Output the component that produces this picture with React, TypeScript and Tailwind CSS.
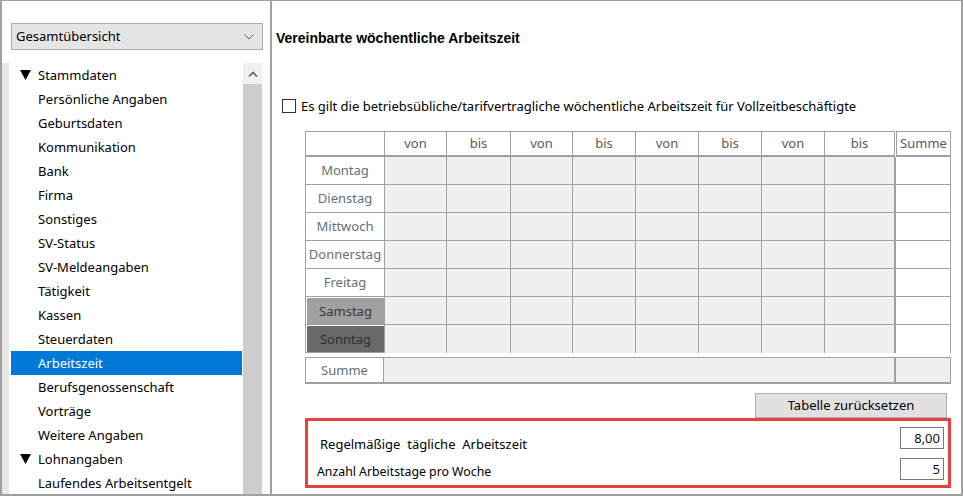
import React from "react";

const treeItems: { label: string; group?: boolean; selected?: boolean }[] = [
  { label: "Stammdaten", group: true },
  { label: "Persönliche Angaben" },
  { label: "Geburtsdaten" },
  { label: "Kommunikation" },
  { label: "Bank" },
  { label: "Firma" },
  { label: "Sonstiges" },
  { label: "SV-Status" },
  { label: "SV-Meldeangaben" },
  { label: "Tätigkeit" },
  { label: "Kassen" },
  { label: "Steuerdaten" },
  { label: "Arbeitszeit", selected: true },
  { label: "Berufsgenossenschaft" },
  { label: "Vorträge" },
  { label: "Weitere Angaben" },
  { label: "Lohnangaben", group: true },
  { label: "Laufendes Arbeitsentgelt" },
];

const colWidths = [62, 64, 62, 63, 63, 63, 63, 70];
const headers = ["von", "bis", "von", "bis", "von", "bis", "von", "bis"];
const days = ["Montag", "Dienstag", "Mittwoch", "Donnerstag", "Freitag", "Samstag", "Sonntag"];

const font = { fontFamily: '"Noto Sans", "Open Sans", sans-serif' };

export default function App() {
  return (
    <div
      className="w-[963px] h-[496px] bg-white flex border-t border-b-2 border-[#a0a0a0] overflow-hidden"
      style={font}
    >
      {/* Left panel */}
      <div className="w-[272px] shrink-0 h-full border-l-2 border-r-2 border-[#a0a0a0] flex flex-col">
        <div className="h-[62px] shrink-0 pt-[22px] pl-[9px]">
          <div className="w-[252px] h-[27px] bg-[#e5e5e5] border border-[#adadad] flex items-center justify-between pl-[4px] pr-[8px]">
            <span className="text-[13px] text-black leading-none">Gesamtübersicht</span>
            <svg width="10" height="6" viewBox="0 0 10 6" fill="none">
              <path d="M0.5 0.5 L5 5 L9.5 0.5" stroke="#606060" strokeWidth="1" />
            </svg>
          </div>
        </div>
        <div className="flex-1 flex min-h-0">
          <div className="w-[7px] shrink-0 bg-[#e8e8e8]" />
          <div className="w-[2px] shrink-0" />
          <div className="w-[231px] shrink-0 flex flex-col">
            {treeItems.map((it) => (
              <div
                key={it.label}
                className={
                  "h-[24px] shrink-0 flex items-center text-[13px] leading-none " +
                  (it.selected ? "bg-[#0078d7] text-white" : "text-black")
                }
              >
                {it.group ? (
                  <span className="w-[27px] pl-[9px] flex items-center">
                    <svg width="11" height="10" viewBox="0 0 11 10">
                      <path d="M0 0 L11 0 L5.5 10 Z" fill="#000" />
                    </svg>
                  </span>
                ) : (
                  <span className="w-[27px]" />
                )}
                <span>{it.label}</span>
              </div>
            ))}
          </div>
          <div className="w-[1px] shrink-0" />
          <div className="w-[19px] shrink-0 flex flex-col">
            <div className="h-[21px] bg-[#f0f0f0] flex items-center justify-center">
              <svg width="10" height="6" viewBox="0 0 10 6" fill="none">
                <path d="M1 5.5 L5 1.5 L9 5.5" stroke="#606060" strokeWidth="1.6" />
              </svg>
            </div>
            <div className="flex-1 bg-[#cdcdcd]" />
          </div>
          <div className="flex-1 bg-[#fafafa]" />
        </div>
      </div>

      {/* Right panel */}
      <div className="flex-1 h-full border-r-2 border-[#a0a0a0] flex flex-col">
        <div
          className="h-[74px] shrink-0 pl-[4px] pt-[29px] text-[14px] font-bold text-black leading-[16px]"
          style={{ fontFamily: '"Liberation Sans", Arial, sans-serif' }}
        >
          Vereinbarte wöchentliche Arbeitszeit
        </div>
        <div className="h-[56px] shrink-0 flex items-start pl-[10px] pt-[23px]">
          <div className="w-[14px] h-[14px] border border-[#333] bg-white shrink-0 mt-[1px]" />
          <span className="ml-[5px] text-[13px] text-black leading-[16px]">
            Es gilt die betriebsübliche/tarifvertragliche wöchentliche Arbeitszeit für Vollzeitbeschäftigte
          </span>
        </div>

        {/* Table */}
        <div className="ml-[33px] flex">
          <div className="flex flex-col">
            {/* header */}
            <div className="flex h-[26px] border-t border-l border-[#a0a0a0] border-b-2">
              <div className="w-[79px] border-r border-[#a0a0a0] bg-white" />
              {headers.map((h, i) => (
                <div
                  key={i}
                  style={{ width: colWidths[i] }}
                  className="border-r border-[#a0a0a0] flex items-center justify-center text-[13px] text-[#5a5a5a] leading-none"
                >
                  {h}
                </div>
              ))}
            </div>
            {days.map((d, ri) => (
              <div key={d} className="flex h-[28px] border-l border-[#a0a0a0]">
                <div className="w-[79px] border-r border-b border-[#a0a0a0] bg-white flex">
                  {d === "Samstag" ? (
                    <div className="flex-1 mt-[1px] ml-[1px] bg-[#a0a0a0] flex items-center justify-center text-[13px] text-[#3a3a3a] leading-none">
                      {d}
                    </div>
                  ) : d === "Sonntag" ? (
                    <div className="flex-1 mt-[1px] ml-[1px] bg-[#696969] flex items-center justify-center text-[13px] text-[#303030] leading-none">
                      {d}
                    </div>
                  ) : (
                    <div className="flex-1 flex items-center justify-center text-[13px] text-[#66707a] leading-none">
                      {d}
                    </div>
                  )}
                </div>
                {colWidths.map((w, i) => (
                  <div
                    key={i}
                    style={{ width: w }}
                    className={
                      "bg-[#f0f0f0] border-r border-[#a0a0a0] " + (ri < days.length - 1 ? "border-b" : "")
                    }
                  />
                ))}
              </div>
            ))}
          </div>
          <div className="flex flex-col">
            <div className="h-[26px] ml-[1px] w-[55px] border-t border-l border-r border-[#a0a0a0] border-b-2 flex items-center justify-center text-[13px] text-[#5a5a5a] leading-none">
              Summe
            </div>
            {days.map((d, ri) => (
              <div
                key={d}
                className={
                  "h-[28px] w-[56px] border-l border-r border-[#a0a0a0] bg-white " +
                  (ri < days.length - 1 ? "border-b" : "")
                }
              />
            ))}
          </div>
        </div>

        {/* Summe row */}
        <div className="ml-[33px] mt-[4px] flex h-[27px] w-[646px] border border-[#a0a0a0] border-b-2">
          <div className="w-[78px] border-r border-[#a0a0a0] bg-white flex items-center justify-center text-[13px] text-[#66707a] leading-none">
            Summe
          </div>
          <div className="w-[512px] bg-[#f0f0f0] border-r-2 border-[#a0a0a0]" />
          <div className="flex-1 bg-[#f0f0f0]" />
        </div>

        {/* Button */}
        <div className="mt-[9px] flex justify-end w-[675px]">
          <div className="w-[192px] h-[25px] bg-[#e1e1e1] border border-[#adadad] flex items-center justify-center text-[13px] text-black leading-none">
            Tabelle zurücksetzen
          </div>
        </div>

        {/* Red box */}
        <div className="ml-[33px] w-[646px] h-[70px] border-[3px] border-[#e8413e] flex flex-col pl-[9px] pr-[4px]">
          <div className="flex items-start justify-between mt-[6px] h-[23px]">
            <span className="text-[13px] text-black leading-none mt-[11px] ml-[3px] whitespace-pre">
              {"Regelmäßige  tägliche  Arbeitszeit"}
            </span>
            <div className="w-[44px] h-[22px] border border-[#7a7a7a] bg-white flex items-center justify-end pr-[3px] text-[13px] text-[#111] leading-none">
              8,00
            </div>
          </div>
          <div className="flex items-start justify-between mt-[8px] h-[22px]">
            <span className="text-[12.3px] text-black leading-none mt-[8px]">Anzahl Arbeitstage pro Woche</span>
            <div className="w-[44px] h-[22px] border border-[#7a7a7a] bg-white flex items-center justify-end pr-[3px] text-[13px] text-[#111] leading-none">
              5
            </div>
          </div>
        </div>
      </div>
    </div>
  );
}
